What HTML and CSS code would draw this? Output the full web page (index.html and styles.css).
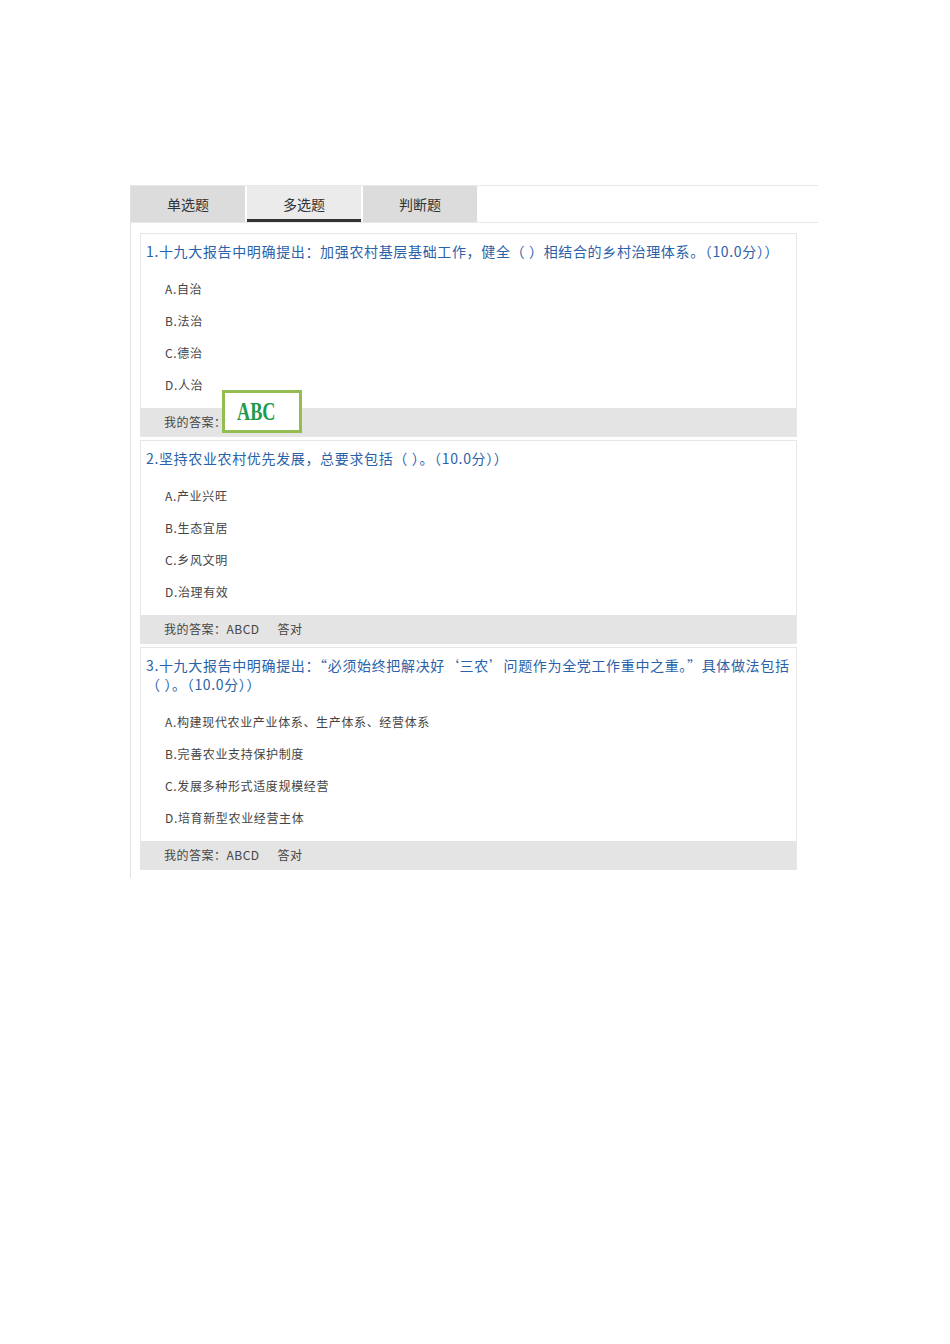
FILE: index.html
```html
<!DOCTYPE html>
<html lang="zh-CN">
<head>
<meta charset="utf-8">
<title>多选题</title>
<link rel="stylesheet" href="styles.css">
</head>
<body>
<div class="page">
  <div class="panel">
    <div class="tabs">
      <div class="tab">单选题</div>
      <div class="tab active">多选题</div>
      <div class="tab">判断题</div>
    </div>
    <div class="list">
      <div class="card">
        <div class="title">1.十九大报告中明确提出：加强农村基层基础工作，健全（ ）相结合的乡村治理体系。（10.0分））</div>
        <ul class="options">
          <li>A.自治</li>
          <li>B.法治</li>
          <li>C.德治</li>
          <li>D.人治</li>
        </ul>
        <div class="answer">我的答案：</div>
        <div class="stamp"><span class="stamp-text">ABC</span></div>
      </div>
      <div class="card">
        <div class="title">2.坚持农业农村优先发展，总要求包括（ ）。（10.0分））</div>
        <ul class="options">
          <li>A.产业兴旺</li>
          <li>B.生态宜居</li>
          <li>C.乡风文明</li>
          <li>D.治理有效</li>
        </ul>
        <div class="answer">我的答案：ABCD<span class="verdict">答对</span></div>
      </div>
      <div class="card">
        <div class="title wide">3.十九大报告中明确提出：“必须始终把解决好‘三农’问题作为全党工作重中之重。”具体做法包括<br>（ ）。（10.0分））</div>
        <ul class="options">
          <li>A.构建现代农业产业体系、生产体系、经营体系</li>
          <li>B.完善农业支持保护制度</li>
          <li>C.发展多种形式适度规模经营</li>
          <li>D.培育新型农业经营主体</li>
        </ul>
        <div class="answer">我的答案：ABCD<span class="verdict">答对</span></div>
      </div>
    </div>
  </div>
</div>
</body>
</html>
```
FILE: styles.css
```css
html, body {
  margin: 0;
  padding: 0;
  background: #ffffff;
}

body {
  font-family: "Noto Sans CJK SC", "Noto Sans", sans-serif;
  color: #333333;
}

.page {
  padding: 185px 0 0 130px;
}

.panel {
  width: 687px;
  border-left: 1px solid #e2e2e2;
}

.tabs {
  display: flex;
  gap: 2px;
  height: 36px;
  border-top: 1px solid #e8e8e8;
  border-bottom: 1px solid #e8e8e8;
}

.tab {
  width: 114px;
  background: #dcdcdc;
  font-size: 14px;
  line-height: 37px;
  text-align: center;
  color: #333333;
  box-sizing: border-box;
}

.tab.active {
  background: #ebebeb;
  border-bottom: 3px solid #333333;
}

.list {
  display: flex;
  flex-direction: column;
  gap: 3px;
  padding: 10px 0 8px 9px;
}

.card {
  position: relative;
  width: 655px;
  border: 1px solid #e6e6e6;
  background: #ffffff;
}

.title {
  padding: 8px 4px 0 5px;
  font-size: 14px;
  line-height: 19px;
  color: #2a62a9;
  letter-spacing: 0.65px;
}

.title.wide {
  white-space: nowrap;
}

.options {
  list-style: none;
  margin: 12px 0 7px;
  padding: 0 0 0 24px;
}

.options li {
  font-size: 12px;
  line-height: 32px;
  height: 32px;
  color: #444444;
  letter-spacing: 0.65px;
}

.answer {
  height: 28px;
  line-height: 28px;
  padding-left: 23px;
  background: #e4e4e4;
  font-size: 12px;
  color: #444444;
  letter-spacing: 0.5px;
}

.verdict {
  margin-left: 18px;
}

.stamp {
  position: absolute;
  left: 81px;
  top: 156px;
  width: 74px;
  height: 37px;
  border: 3px solid #93bd50;
  background: #ffffff;
  overflow: hidden;
}

.stamp-text {
  display: inline-block;
  margin-left: 12px;
  color: #1d9a4c;
  font-family: "Liberation Serif", serif;
  font-weight: bold;
  font-size: 26px;
  line-height: 38px;
  transform: scaleX(0.7);
  transform-origin: left center;
}
```
